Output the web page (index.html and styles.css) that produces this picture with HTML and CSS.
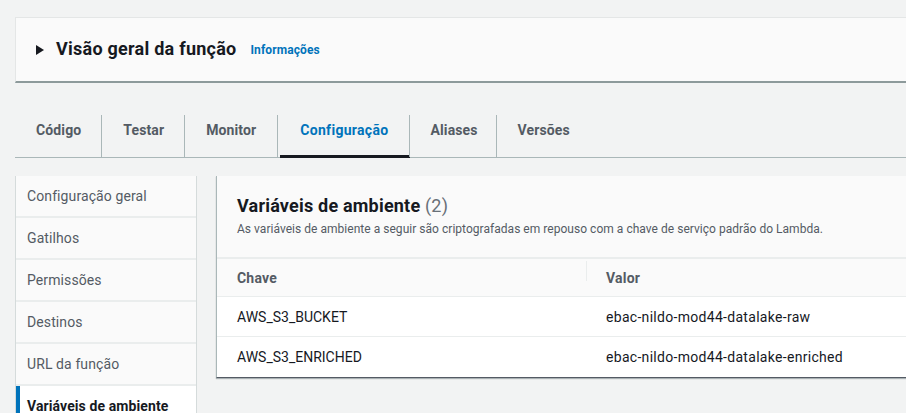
FILE: index.html
```html
<!DOCTYPE html>
<html lang="pt">
<head>
<meta charset="utf-8">
<link rel="stylesheet" href="styles.css">
</head>
<body>
<div class="page">
  <div class="overview">
    <svg class="caret" width="8" height="10" viewBox="0 0 8 10"><path d="M0 0 L8 5 L0 10 Z" fill="#16191f"/></svg>
    <h1 class="overview-title">Visão geral da função</h1>
    <a class="info">Informações</a>
  </div>

  <div class="tabs">
    <div class="tab">Código</div>
    <div class="tab">Testar</div>
    <div class="tab">Monitor</div>
    <div class="tab active">Configuração</div>
    <div class="tab narrow">Aliases</div>
    <div class="tab">Versões</div>
  </div>

  <div class="content">
    <nav class="sidenav">
      <div class="nav-item">Configuração geral</div>
      <div class="nav-item">Gatilhos</div>
      <div class="nav-item">Permissões</div>
      <div class="nav-item">Destinos</div>
      <div class="nav-item">URL da função</div>
      <div class="nav-item current">Variáveis de ambiente</div>
    </nav>

    <section class="card">
      <div class="card-header">
        <h2 class="card-title">Variáveis de ambiente <span class="count">(2)</span></h2>
        <p class="card-desc">As variáveis de ambiente a seguir são criptografadas em repouso com a chave de serviço padrão do Lambda.</p>
      </div>
      <div class="table">
        <div class="row head">
          <div class="cell key">Chave</div>
          <div class="cell val"><span class="sep"></span>Valor</div>
        </div>
        <div class="row">
          <div class="cell key">AWS_S3_BUCKET</div>
          <div class="cell val">ebac-nildo-mod44-datalake-raw</div>
        </div>
        <div class="row last">
          <div class="cell key">AWS_S3_ENRICHED</div>
          <div class="cell val">ebac-nildo-mod44-datalake-enriched</div>
        </div>
      </div>
    </section>
  </div>
</div>
</body>
</html>
```

FILE: styles.css
```css
* { box-sizing: border-box; }
html, body {
  margin: 0;
  padding: 0;
  background: #f2f3f3;
  font-family: Roboto, "Noto Sans", Arial, sans-serif;
  color: #16191f;
  overflow: hidden;
  height: 413px;
}
.page {
  padding: 17px 0 0 15px;
}
.overview {
  height: 66px;
  background: #fafafa;
  border-top: 1px solid #e4e6e6;
  border-left: 1px solid #e4e6e6;
  border-bottom: 2px solid #8d9a9b;
  display: flex;
  align-items: center;
  padding-left: 20px;
}
.caret { margin-right: 12px; margin-top: 0; }
.overview-title {
  font-size: 18px;
  font-weight: 700;
  margin: 0 0 2px 0;
  letter-spacing: 0.25px;
}
.info {
  font-size: 12px;
  font-weight: 700;
  color: #0073bb;
  margin-left: 14px;
  margin-top: 1px;
  letter-spacing: 0.1px;
}
.tabs {
  margin-top: 32px;
  display: flex;
  border-bottom: 1px solid #aab7b8;
  height: 43px;
}
.tab {
  position: relative;
  padding: 0 20px 13px 21px;
  font-size: 14px;
  font-weight: 700;
  letter-spacing: 0.12px;
  color: #545b64;
  display: flex;
  align-items: center;
  height: 29px;
  box-sizing: content-box;
}
.tab + .tab { border-left: 1px solid #aab7b8; }
.tab:nth-child(3) { padding-right: 21px; }
.tab.narrow { padding-left: 20px; padding-right: 18px; }
.tab.active { color: #0073bb; padding-left: 22px; padding-right: 21px; letter-spacing: 0.3px; }
.tab.active::after {
  content: "";
  position: absolute;
  left: 2px;
  right: -1px;
  bottom: -1px;
  height: 3px;
  background: #16191f;
}
.content {
  display: flex;
  margin-top: 18px;
  gap: 19px;
  align-items: flex-start;
}
.sidenav {
  width: 182px;
  flex: none;
  border-left: 1px solid #d5dbdb;
  border-right: 1px solid #d5dbdb;
  height: 260px;
  background: #eaeded;
  display: flex;
  flex-direction: column;
  gap: 2px;
}
.nav-item {
  height: 40px;
  flex: none;
  background: #fafafa;
  font-size: 14px;
  letter-spacing: 0.1px;
  color: #545b64;
  display: flex;
  align-items: center;
  padding-left: 11px;
}
.nav-item.current {
  background: #ffffff;
  color: #16191f;
  font-weight: 700;
  border-left: 4px solid #0073bb;
  padding-left: 7px;
  height: 60px;
  align-items: flex-start;
  padding-top: 12px;
}
.card {
  flex: 1;
  background: #ffffff;
  border-left: 1px solid #aab7b8;
  border-bottom: 1px solid #545b64;
  box-shadow: 0 1px 1px rgba(0,28,36,0.3);
}
.card-header {
  background: #fafafa;
  height: 83px;
  border-bottom: 2px solid #eaeded;
  padding: 19px 20px 0 20px;
}
.card-title {
  margin: 0;
  font-size: 18px;
  font-weight: 700;
  line-height: 22px;
  letter-spacing: 0.2px;
}
.count { font-weight: 400; color: #687078; }
.card-desc {
  margin: 4px 0 0 0;
  font-size: 12px;
  color: #545b64;
  line-height: 16px;
  letter-spacing: 0.03px;
}
.row {
  display: flex;
  height: 40px;
  border-bottom: 1px solid #eaeded;
  align-items: center;
}
.row.head { height: 38px; background: #fafafa; }
.row.last { border-bottom: none; height: 40px; }
.cell {
  font-size: 14px;
  color: #16191f;
}
.key { width: 369px; padding-left: 20px; }
.val { position: relative; padding-left: 20px; letter-spacing: 0.3px; }
.head .cell { font-weight: 700; color: #545b64; letter-spacing: 0.2px; }
.sep {
  position: absolute;
  left: 0;
  top: -9px;
  height: 20px;
  border-left: 1px solid #eaeded;
}
```
